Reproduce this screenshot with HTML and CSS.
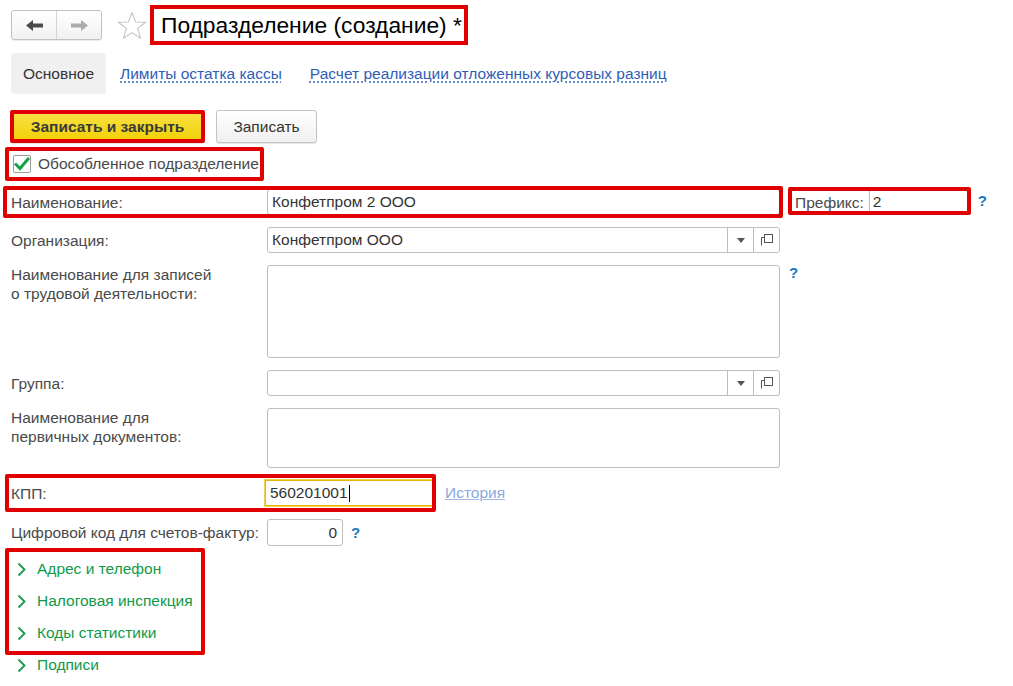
FILE: index.html
```html
<!DOCTYPE html>
<html lang="ru">
<head>
<meta charset="utf-8">
<title>Подразделение (создание)</title>
<link rel="stylesheet" href="styles.css">
</head>
<body>
<div class="page">
  <header class="head">
    <div class="nav">
      <span class="nav-btn">
        <svg width="17" height="11" viewBox="0 0 17 11"><path d="M0 5.5 L7 0 L7 3.6 L17 3.6 L17 7.4 L7 7.4 L7 11 Z" fill="#4a4a4a"/></svg>
      </span>
      <span class="nav-btn">
        <svg width="17" height="11" viewBox="0 0 17 11"><path d="M17 5.5 L10 0 L10 3.6 L0 3.6 L0 7.4 L10 7.4 L10 11 Z" fill="#ababab"/></svg>
      </span>
    </div>
    <svg class="star" width="30" height="29" viewBox="0 0 30 29"><path d="M15 1.5 L18.6 11 L28.6 11.2 L20.7 17.4 L23.5 27.3 L15 21.6 L6.5 27.3 L9.3 17.4 L1.4 11.2 L11.4 11 Z" fill="none" stroke="#c4c4c4" stroke-width="1.1" stroke-linejoin="round"/></svg>
    <h1 class="title">Подразделение (создание) *</h1>
  </header>

  <nav class="tabs">
    <span class="tab tab-active">Основное</span>
    <a class="tab tab-link" href="#">Лимиты остатка кассы</a>
    <a class="tab tab-link" href="#">Расчет реализации отложенных курсовых разниц</a>
  </nav>

  <div class="toolbar">
    <span class="btn btn-main mark mark-save">Записать и закрыть</span>
    <span class="btn">Записать</span>
  </div>

  <label class="check mark mark-check">
    <span class="check-box">
      <svg width="16" height="14" viewBox="0 0 16 14"><path d="M2 7.5 L6 11.5 L14 2" fill="none" stroke="#17a04a" stroke-width="3" stroke-linecap="square"/></svg>
    </span>
    <span class="check-label">Обособленное подразделение</span>
  </label>

  <div class="form">
    <div class="row">
      <div class="pair mark mark-name">
        <span class="label">Наименование:</span>
        <span class="field field-wide">Конфетпром 2 ООО</span>
      </div>
      <div class="prefix mark mark-prefix">
        <span class="label prefix-label">Префикс:</span>
        <span class="field prefix-field">2</span>
      </div>
      <span class="hint hint-prefix">?</span>
    </div>

    <div class="row">
      <span class="label">Организация:</span>
      <span class="field field-wide field-select">
        <span class="select-text">Конфетпром ООО</span>
        <span class="select-btn">
          <svg width="8" height="5" viewBox="0 0 8 5"><path d="M0 0 H8 L4 5 Z" fill="#555"/></svg>
        </span>
        <span class="select-btn">
          <svg width="14" height="14" viewBox="0 0 14 14"><rect x="4.5" y="1.5" width="8" height="8" fill="none" stroke="#555"/><path d="M4 4.5 H1.5 V12.5" fill="none" stroke="#555"/></svg>
        </span>
      </span>
    </div>

    <div class="row row-top">
      <span class="label">Наименование для записей<br>о трудовой деятельности:</span>
      <span class="field field-wide area-tall"></span>
      <span class="hint hint-area">?</span>
    </div>

    <div class="row">
      <span class="label">Группа:</span>
      <span class="field field-wide field-select">
        <span class="select-text"></span>
        <span class="select-btn">
          <svg width="8" height="5" viewBox="0 0 8 5"><path d="M0 0 H8 L4 5 Z" fill="#555"/></svg>
        </span>
        <span class="select-btn">
          <svg width="14" height="14" viewBox="0 0 14 14"><rect x="4.5" y="1.5" width="8" height="8" fill="none" stroke="#555"/><path d="M4 4.5 H1.5 V12.5" fill="none" stroke="#555"/></svg>
        </span>
      </span>
    </div>

    <div class="row row-top">
      <span class="label">Наименование для<br>первичных документов:</span>
      <span class="field field-wide area-short"></span>
    </div>

    <div class="row row-kpp">
      <div class="pair mark mark-kpp">
        <span class="label">КПП:</span>
        <span class="field field-kpp">560201001<span class="caret"></span></span>
      </div>
      <a class="history" href="#">История</a>
    </div>

    <div class="row row-code">
      <span class="label">Цифровой код для счетов-фактур:</span>
      <span class="field field-num">0</span>
      <span class="hint hint-num">?</span>
    </div>
  </div>

  <div class="groups">
    <div class="group-set mark mark-groups">
      <div class="group"><svg class="chev" width="9" height="15" viewBox="0 0 9 15"><path d="M1.5 1.5 L7.5 7.5 L1.5 13.5" fill="none" stroke="#119c4c" stroke-width="1.8"/></svg><span>Адрес и телефон</span></div>
      <div class="group"><svg class="chev" width="9" height="15" viewBox="0 0 9 15"><path d="M1.5 1.5 L7.5 7.5 L1.5 13.5" fill="none" stroke="#119c4c" stroke-width="1.8"/></svg><span>Налоговая инспекция</span></div>
      <div class="group"><svg class="chev" width="9" height="15" viewBox="0 0 9 15"><path d="M1.5 1.5 L7.5 7.5 L1.5 13.5" fill="none" stroke="#119c4c" stroke-width="1.8"/></svg><span>Коды статистики</span></div>
    </div>
    <div class="group"><svg class="chev" width="9" height="15" viewBox="0 0 9 15"><path d="M1.5 1.5 L7.5 7.5 L1.5 13.5" fill="none" stroke="#119c4c" stroke-width="1.8"/></svg><span>Подписи</span></div>
  </div>
</div>
</body>
</html>
```

FILE: styles.css
```css
* { box-sizing: border-box; }

html, body {
  margin: 0;
  background: #fff;
}

body {
  font-family: "Liberation Sans", Arial, sans-serif;
  font-size: 15.5px;
  color: #4a4a4a;
  overflow: hidden;
}

.page {
  padding: 5px 0 0 11px;
  width: 1013px;
  height: 686px;
}

/* red highlight frames drawn over the form */
.mark { position: relative; }
.mark::after {
  content: "";
  position: absolute;
  border: 4px solid #e00000;
  border-radius: 2px;
  pointer-events: none;
}
.mark-save::after   { top: -1px; bottom: -1px; left: -2px; right: -2px; }
.mark-check::after  { top: 0; bottom: 0; left: -6px; right: -5px; }
.mark-name::after   { top: -3px; bottom: -3px; left: -8px; right: -3px; }
.mark-prefix::after { top: -3px; bottom: -1px; left: -7px; right: -3px; }
.mark-kpp::after    { top: -6px; bottom: -6px; left: -6px; right: -3px; }
.mark-groups::after { top: -5px; bottom: -6px; left: -6px; right: 0; }

/* header */
.head {
  display: flex;
  align-items: center;
  height: 40px;
}

.nav {
  display: flex;
  width: 91px;
  height: 30px;
  border: 1px solid #c2c2c2;
  border-radius: 3px;
  background: linear-gradient(#fff, #f1f1f1);
  box-shadow: 0 1px 1px rgba(0,0,0,0.08);
}

.nav-btn {
  flex: 1;
  display: flex;
  align-items: center;
  justify-content: center;
}
.nav-btn + .nav-btn { border-left: 1px solid #d4d4d4; }

.star { margin-left: 15px; }

.title {
  margin: 0 0 0 3px;
  height: 40px;
  padding: 0 2px 0 7px;
  border: 4px solid #e00000;
  font-weight: normal;
  font-size: 22.8px;
  line-height: 32px;
  color: #000;
  white-space: nowrap;
}

/* tabs */
.tabs {
  display: flex;
  margin-top: 8px;
  height: 41px;
}

.tab {
  display: flex;
  align-items: center;
  padding: 0 12px;
  border-radius: 3px;
}

.tab-active {
  background: #f0f0f0;
  color: #333;
  margin-right: 2px;
}

.tab-link {
  color: #2f5db8;
  text-decoration: underline dotted #3b6cc6;
  text-underline-offset: 3px;
}
.tab-link + .tab-link { margin-left: 4px; }

/* command bar */
.toolbar {
  display: flex;
  gap: 12px;
  margin-top: 16px;
}

.btn {
  display: flex;
  align-items: center;
  justify-content: center;
  height: 33px;
  width: 101px;
  border: 1px solid #c4c4c4;
  border-radius: 3px;
  background: linear-gradient(#fff, #f0f0f0);
  color: #333;
  box-shadow: 0 1px 1px rgba(0,0,0,0.1);
}

.btn-main {
  width: 193px;
  background: linear-gradient(#f9e34a, #f1cf00);
  border-color: #d6b400;
  font-weight: bold;
  color: #3a3a3a;
}

/* checkbox */
.check {
  display: inline-flex;
  align-items: center;
  gap: 7px;
  height: 34px;
  margin-top: 4px;
  padding-left: 2px;
}

.check-box {
  width: 18px;
  height: 18px;
  border: 1px solid #9a9a9a;
  border-radius: 2px;
  display: flex;
  align-items: center;
  justify-content: center;
  background: #fff;
}

.check-label { color: #4a4a4a; }

/* form */
.form {
  display: flex;
  flex-direction: column;
  gap: 12px;
  margin-top: 8px;
}

.row {
  display: flex;
  align-items: center;
}
.row-top { align-items: flex-start; }

.pair {
  display: flex;
  align-items: center;
}

.label {
  width: 256px;
  flex: none;
  color: #4a4a4a;
  line-height: 19px;
}

.field {
  display: flex;
  align-items: center;
  height: 26px;
  border: 1px solid #bdbdbd;
  border-radius: 3px;
  background: #fff;
  padding: 0 4px;
  color: #333;
}

.field-wide { width: 513px; }

.field-select { padding: 0 0 0 4px; }
.select-text { flex: 1; }
.select-btn {
  width: 26px;
  height: 100%;
  border-left: 1px solid #bdbdbd;
  display: flex;
  align-items: center;
  justify-content: center;
}

.area-tall { height: 93px; align-items: flex-start; }
.area-short { height: 60px; align-items: flex-start; }

.prefix {
  display: flex;
  align-items: center;
  margin-left: 15px;
  height: 24px;
}
.prefix-label { width: auto; padding-right: 5px; }
.prefix-field {
  width: 99px;
  height: 24px;
  border-radius: 0;
  border-width: 0 0 0 1px;
  padding-left: 3px;
}

.hint {
  color: #1a78c2;
  font-weight: bold;
  font-size: 15px;
}
.hint-prefix { margin-left: 10px; margin-top: -4px; }
.hint-area { margin-left: 9px; margin-top: -1px; }
.hint-num { margin-left: 8px; }

.field-kpp {
  width: 168px;
  margin-left: -2px;
  border: 1px solid #eab700;
  box-shadow: 0 0 0 1px #f3cf4a;
  border-radius: 0;
}
.caret {
  display: inline-block;
  width: 1px;
  height: 17px;
  background: #000;
  margin-left: 1px;
}

.history {
  margin-left: 12px;
  color: #8aa9e0;
  text-decoration: underline;
  text-decoration-color: #9fb8e6;
}

.row-code { margin-top: 1px; }
.field-num {
  width: 76px;
  height: 27px;
  justify-content: flex-end;
  padding-right: 5px;
}

/* collapsible groups */
.groups {
  margin-top: 7px;
}

.group-set { width: 194px; }

.group {
  display: flex;
  align-items: center;
  gap: 11px;
  height: 32px;
  padding-left: 6px;
  color: #0f9a4a;
}
```
